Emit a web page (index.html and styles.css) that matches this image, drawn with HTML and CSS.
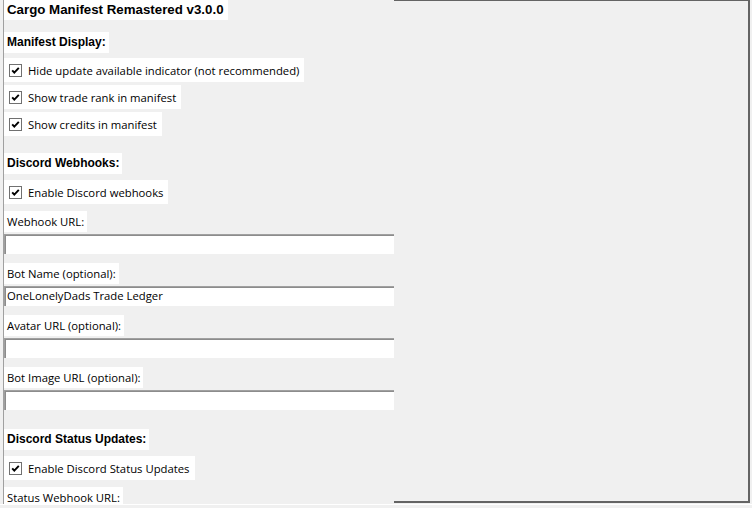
FILE: index.html
```html
<!DOCTYPE html>
<html>
<head>
<meta charset="utf-8">
<link rel="stylesheet" href="styles.css">
</head>
<body>
<div class="window">
  <div class="main">
    <div class="column">
      <div class="title">Cargo Manifest Remastered v3.0.0</div>
      <div class="heading h-first">Manifest Display:</div>
      <label class="check first"><span class="box"><svg viewBox="0 0 13 13" width="13" height="13"><rect x="0.5" y="0.5" width="12" height="12" fill="#fff" stroke="#707070"/><path d="M3.2 6.3 L5.3 8.6 L9.8 3.8" fill="none" stroke="#000" stroke-width="1.9"/></svg></span>Hide update available indicator (not recommended)</label>
      <label class="check"><span class="box"><svg viewBox="0 0 13 13" width="13" height="13"><rect x="0.5" y="0.5" width="12" height="12" fill="#fff" stroke="#707070"/><path d="M3.2 6.3 L5.3 8.6 L9.8 3.8" fill="none" stroke="#000" stroke-width="1.9"/></svg></span>Show trade rank in manifest</label>
      <label class="check"><span class="box"><svg viewBox="0 0 13 13" width="13" height="13"><rect x="0.5" y="0.5" width="12" height="12" fill="#fff" stroke="#707070"/><path d="M3.2 6.3 L5.3 8.6 L9.8 3.8" fill="none" stroke="#000" stroke-width="1.9"/></svg></span>Show credits in manifest</label>

      <div class="heading h-section">Discord Webhooks:</div>
      <label class="check first-alt"><span class="box"><svg viewBox="0 0 13 13" width="13" height="13"><rect x="0.5" y="0.5" width="12" height="12" fill="#fff" stroke="#707070"/><path d="M3.2 6.3 L5.3 8.6 L9.8 3.8" fill="none" stroke="#000" stroke-width="1.9"/></svg></span>Enable Discord webhooks</label>
      <div class="label after-check">Webhook URL:</div>
      <div class="entry"></div>
      <div class="label">Bot Name (optional):</div>
      <div class="entry">OneLonelyDads Trade Ledger</div>
      <div class="label">Avatar URL (optional):</div>
      <div class="entry"></div>
      <div class="label">Bot Image URL (optional):</div>
      <div class="entry"></div>

      <div class="heading h-status">Discord Status Updates:</div>
      <label class="check first-alt"><span class="box"><svg viewBox="0 0 13 13" width="13" height="13"><rect x="0.5" y="0.5" width="12" height="12" fill="#fff" stroke="#707070"/><path d="M3.2 6.3 L5.3 8.6 L9.8 3.8" fill="none" stroke="#000" stroke-width="1.9"/></svg></span>Enable Discord Status Updates</label>
      <div class="label after-check">Status Webhook URL:</div>
      <div class="entry"></div>
    </div>
    <div class="panel"></div>
  </div>
  <div class="bottom-line"></div>
</div>
</body>
</html>
```

FILE: styles.css
```css
* { box-sizing: border-box; }
html, body {
  margin: 0;
  padding: 0;
  background: #f0f0f0;
  width: 752px;
  height: 508px;
  overflow: hidden;
}
body {
  font-family: "Open Sans", "Noto Sans", sans-serif;
  font-size: 11.3px;
  color: #000;
}
.window {
  display: flex;
  flex-direction: column;
  height: 508px;
}
.main {
  display: flex;
  height: 504px;
  padding-left: 3px;
  flex-shrink: 0;
}
.column {
  width: 391px;
  height: 504px;
  border-left: 1px solid #a0a0a0;
  overflow: hidden;
  display: flex;
  flex-direction: column;
  align-items: flex-start;
}
.column > * { flex-shrink: 0; }
.title {
  background: #fff;
  height: 20px;
  line-height: 20px;
  padding: 0 4px 0 3px;
  font-family: "Liberation Sans", Arial, sans-serif;
  font-weight: bold;
  font-size: 13.3px;
}
.heading {
  background: #fff;
  height: 21px;
  line-height: 21px;
  padding: 0 3px 0 3px;
  font-family: "Liberation Sans", Arial, sans-serif;
  font-weight: bold;
  font-size: 12px;
}
.h-first { margin-top: 12px; }
.h-section { margin-top: 17px; }
.h-status { margin-top: 19px; }
.check {
  background: #fff;
  height: 24px;
  display: flex;
  align-items: center;
  padding: 0 5px 0 5px;
  margin-top: 3px;
}
.check.first { margin-top: 5px; }
.check.first-alt { margin-top: 6px; }
.box {
  width: 13px;
  height: 13px;
  margin-right: 6px;
  display: block;
}
.box svg { display: block; }
.label {
  background: #fff;
  height: 21px;
  line-height: 21px;
  padding: 0 3px 0 3px;
  margin-top: 9px;
}
.label.after-check { margin-top: 7px; }
.entry {
  align-self: stretch;
  height: 20px;
  line-height: 18px;
  background: #fff;
  border-top: 1px solid #a0a0a0;
  border-left: 1px solid #a0a0a0;
  box-shadow: inset 1px 1px 0 #8c8c8c;
  margin-top: 2px;
  padding-left: 2px;
}
.panel {
  width: 356px;
  height: 503px;
  border-top: 1px solid #646464;
  border-right: 2px solid #646464;
  border-bottom: 2px solid #646464;
}
.bottom-line {
  height: 1px;
  background: #ffffff;
  flex-shrink: 0;
}
```
